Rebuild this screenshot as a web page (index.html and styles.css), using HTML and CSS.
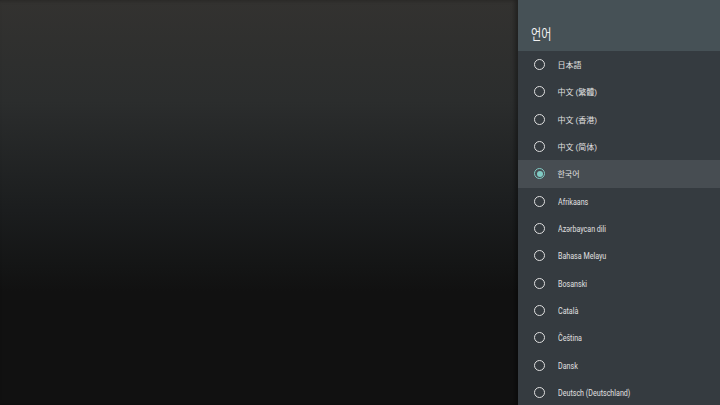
FILE: index.html
```html
<!DOCTYPE html>
<html>
<head>
    <meta charset="UTF-8">
    <meta name="viewport" content="width=device-width, initial-scale=1.0">
    <title>언어</title>
    <link rel="stylesheet" href="styles.css">
</head>
<body>
    <div id="screen">
        <div id="backdrop"></div>
        <div id="panel">
            <div id="panelHeader"><span class="title">언어</span></div>
            <ul id="languageList">
                <li class="languageItem"><span class="radio"></span><span class="label">日本語</span></li>
                <li class="languageItem"><span class="radio"></span><span class="label">中文 (繁體)</span></li>
                <li class="languageItem"><span class="radio"></span><span class="label">中文 (香港)</span></li>
                <li class="languageItem"><span class="radio"></span><span class="label">中文 (简体)</span></li>
                <li class="languageItem selected"><span class="radio checked"></span><span class="label">한국어</span></li>
                <li class="languageItem"><span class="radio"></span><span class="label latin">Afrikaans</span></li>
                <li class="languageItem"><span class="radio"></span><span class="label latin">Azərbaycan dili</span></li>
                <li class="languageItem"><span class="radio"></span><span class="label latin">Bahasa Melayu</span></li>
                <li class="languageItem"><span class="radio"></span><span class="label latin">Bosanski</span></li>
                <li class="languageItem"><span class="radio"></span><span class="label latin">Català</span></li>
                <li class="languageItem"><span class="radio"></span><span class="label latin">Čeština</span></li>
                <li class="languageItem"><span class="radio"></span><span class="label latin">Dansk</span></li>
                <li class="languageItem"><span class="radio"></span><span class="label latin">Deutsch (Deutschland)</span></li>
            </ul>
        </div>
    </div>
</body>
</html>
```

FILE: styles.css
```css
body {
    margin: 0;
    padding: 0;
    width: 720px;
    height: 405px;
    overflow: hidden;
    font-family: Roboto, "Noto Sans CJK KR", "Noto Sans CJK JP", sans-serif;
    background-color: #111;
}

#screen {
    display: flex;
    width: 720px;
    height: 405px;
}

#backdrop {
    flex: 1;
    background: linear-gradient(to bottom, #333230 0%, #2b2d2d 25%, #1b1d1e 52%, #141515 66%, #111 72%, #111 100%);
    box-shadow: inset -3px 0 4px rgba(0, 0, 0, 0.35);
}

#panel {
    width: 202px;
    background-color: #353b40;
    color: #e6e6e6;
}

#panelHeader {
    height: 51px;
    box-sizing: border-box;
    padding: 23px 0 0 13px;
    background-color: #465156;
    font-size: 13.5px;
    color: #f2f2f2;
}

.title {
    display: inline-block;
    transform: scaleX(0.82);
    transform-origin: left center;
}

#languageList {
    list-style: none;
    margin: 0;
    padding: 0;
}

.languageItem {
    display: flex;
    align-items: center;
    height: 27.33px;
    padding-left: 16px;
    font-size: 8px;
    color: #e0e0e0;
}

.languageItem.selected {
    background-color: #474d52;
}

.label {
    display: inline-block;
}

/* latin names are drawn in a condensed face on the device */
.label.latin {
    font-size: 9.5px;
    transform: scaleX(0.75);
    transform-origin: left center;
}

.radio {
    width: 9px;
    height: 9px;
    border: 1.6px solid #e0e0e0;
    border-radius: 50%;
    margin-right: 12.5px;
    position: relative;
    flex-shrink: 0;
}

.radio.checked {
    border-color: #80cbc4;
}

.radio.checked::after {
    content: "";
    position: absolute;
    left: 1.5px;
    top: 1.5px;
    width: 6px;
    height: 6px;
    border-radius: 50%;
    background-color: #80cbc4;
}
```
